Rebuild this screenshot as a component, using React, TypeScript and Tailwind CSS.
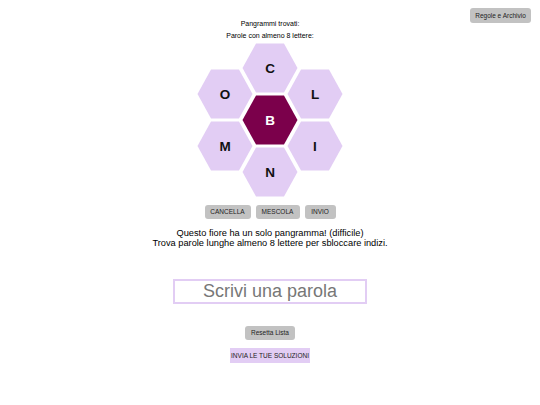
import React from "react";

const hexes: { l: string; x: number; y: number; center?: boolean }[] = [
  { l: "C", x: 75, y: 26 },
  { l: "O", x: 30, y: 52 },
  { l: "L", x: 120, y: 52 },
  { l: "B", x: 75, y: 78, center: true },
  { l: "M", x: 30, y: 104 },
  { l: "I", x: 120, y: 104 },
  { l: "N", x: 75, y: 130 },
];

function pts(cx: number, cy: number) {
  const r = 27.5;
  const t = 14;
  const h = 24.5;
  return [
    [cx - r, cy],
    [cx - t, cy - h],
    [cx + t, cy - h],
    [cx + r, cy],
    [cx + t, cy + h],
    [cx - t, cy + h],
  ]
    .map((p) => p.join(","))
    .join(" ");
}

export default function App() {
  return (
    <div
      className="relative w-[540px] h-[405px] bg-white text-black"
      style={{ fontFamily: '"Liberation Sans", Arial, sans-serif' }}
    >
      <button className="absolute left-[470px] top-[8px] w-[61px] h-[15px] rounded-[3px] bg-[#c2c2c2] text-[6.5px] leading-[15px] text-[#222]">
        Regole e Archivio
      </button>
      <div className="flex flex-col items-center pt-[18px]">
        <div className="text-[7px] leading-[12px]">Pangrammi trovati:</div>
        <div className="text-[7px] leading-[12px]">Parole con almeno 8 lettere:</div>
        <svg width="150" height="158" viewBox="0 0 150 158" className="block">
          {hexes.map((h) => (
            <g key={h.l}>
              <polygon points={pts(h.x, h.y)} fill={h.center ? "#7b004b" : "#e2cdf4"} />
              <text
                x={h.x}
                y={h.y + 5}
                textAnchor="middle"
                fontSize="13.5"
                fontWeight="bold"
                fill={h.center ? "#ffffff" : "#111111"}
                fontFamily='"Liberation Sans", Arial, sans-serif'
              >
                {h.l}
              </text>
            </g>
          ))}
        </svg>
        <div className="mt-[5px] flex gap-[5px]">
          <button className="w-[46px] h-[14px] rounded-[3px] bg-[#c2c2c2] text-[6.5px] leading-[14px] text-[#222]">CANCELLA</button>
          <button className="w-[44px] h-[14px] rounded-[3px] bg-[#c2c2c2] text-[6.5px] leading-[14px] text-[#222]">MESCOLA</button>
          <button className="w-[31px] h-[14px] rounded-[3px] bg-[#c2c2c2] text-[6.5px] leading-[14px] text-[#222]">INVIO</button>
        </div>
        <div className="mt-[9px] text-center text-[9.25px] leading-[10px]">
          <div>Questo fiore ha un solo pangramma! (difficile)</div>
          <div>Trova parole lunghe almeno 8 lettere per sbloccare indizi.</div>
        </div>
        <div className="mt-[31px] w-[194px] h-[25px] border-2 border-[#e2cdf4] flex items-center justify-center text-[18px] leading-[21px] text-[#777]">
          Scrivi una parola
        </div>
        <button className="mt-[22px] w-[50px] h-[14px] rounded-[3px] bg-[#c2c2c2] text-[6.5px] leading-[14px] text-[#222]">
          Resetta Lista
        </button>
        <button className="mt-[8px] w-[80px] h-[15px] bg-[#e2cdf4] text-[6.5px] leading-[15px] text-[#222]">
          INVIA LE TUE SOLUZIONI
        </button>
      </div>
    </div>
  );
}
